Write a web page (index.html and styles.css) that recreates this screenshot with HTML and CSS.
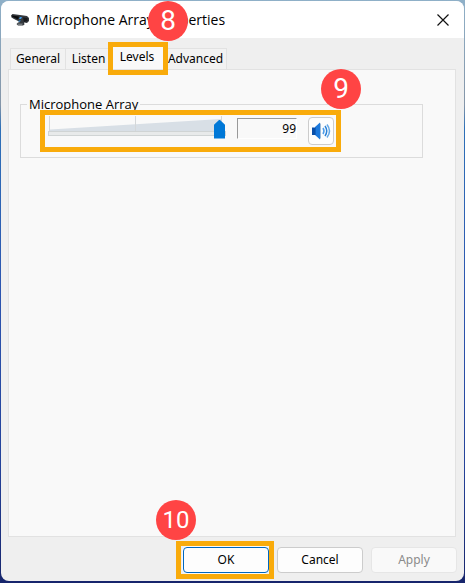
FILE: index.html
```html
<!DOCTYPE html>
<html lang="en">
<head>
<meta charset="utf-8">
<title>Microphone Array Properties</title>
<link rel="stylesheet" href="styles.css">
</head>
<body>
<main class="dialog">
  <header class="titlebar">
    <svg class="mic-icon" viewBox="0 0 18 12" aria-hidden="true">
      <path d="M0 1.5 1.5 0 9 1l7 1 2 2v3l-2 2-3-.5.5 2-1.500 1H7l-1.500-1.500L7 8.500 9 8 3 5 .5 3.500Z" fill="#34383d"/>
      <path d="M1 1.500 8 2.500l-1 3-6-3Z" fill="#08090b"/>
      <path d="M12 3.500 16.500 4v3L13 8Z" fill="#17191c"/>
      <path d="M9 3h2l-1 2H8Z" fill="#3b9bea"/>
      <path d="M8 6.500h2l-1 1H7Z" fill="#2585d5"/>
      <path d="M6 9.500h6l-1 1.500H7Z" fill="#73797e"/>
    </svg>
    <h1 class="title">Microphone Array Properties</h1>
    <button class="close" type="button" aria-label="Close">
      <svg viewBox="0 0 12 12" aria-hidden="true"><path d="M.5.5l11 11M11.500.5l-11 11" stroke="#111" stroke-width="1.200"/></svg>
    </button>
    <span class="badge badge-tab">8</span>
  </header>
  <div class="content">
    <div class="tabs" role="tablist">
      <button class="tab tab-general" type="button" role="tab">General</button>
      <button class="tab tab-listen" type="button" role="tab">Listen</button>
      <button class="tab tab-levels" type="button" role="tab" aria-selected="true">Levels<span class="mark mark-tab"></span></button>
      <button class="tab tab-advanced" type="button" role="tab">Advanced</button>
    </div>
    <section class="panel" role="tabpanel">
      <fieldset class="group">
        <legend>Microphone Array</legend>
        <div class="level-row">
          <div class="slider">
            <svg class="scale" viewBox="0 0 178 16" preserveAspectRatio="none" aria-hidden="true">
              <path d="M2 13.500 173 3v12H2Z" fill="#d8dfe6"/>
              <path d="M1.500 0v15M87.500 0v15M173.500 0v15" stroke="#d4d7d9"/>
            </svg>
            <input class="range" type="range" min="0" max="99" value="99" aria-label="Microphone Array level">
          </div>
          <input class="value" type="text" value="99" aria-label="Level value">
          <button class="mute" type="button" aria-label="Mute">
            <svg viewBox="0 0 20 18" aria-hidden="true">
              <path d="M1 5.500h3.500V13H1Z" fill="#0a4fa8"/>
              <path d="M4 5 9 .5v17L4 13Z" fill="#1b78dc"/>
              <path d="M4.500 5.500V13" stroke="#0d5fc0"/>
              <path d="M9.500 1.500v15" stroke="#9dbbd8"/>
              <path d="M12 6q2 3 0 6" fill="none" stroke="#4d9ce8" stroke-width="1.500"/>
              <path d="M14 4q3.500 5 0 10" fill="none" stroke="#2c83d8" stroke-width="1.500"/>
              <path d="M16 2.500q5 6.500 0 13" fill="none" stroke="#67a9e5" stroke-width="1.500"/>
            </svg>
          </button>
          <span class="mark mark-level"></span>
          <span class="badge badge-level">9</span>
        </div>
      </fieldset>
    </section>
    <footer class="actions">
      <div class="ok-wrap">
        <button class="btn btn-ok" type="button">OK</button>
        <span class="mark mark-ok"></span>
        <span class="badge badge-ok">10</span>
      </div>
      <button class="btn" type="button">Cancel</button>
      <button class="btn" type="button" disabled>Apply</button>
    </footer>
  </div>
</main>
</body>
</html>
```
FILE: styles.css
```css
* { box-sizing: border-box; }
body {
  margin: 0;
  min-height: 100vh;
  padding: 1px 1px 2px;
  display: flex;
  background: linear-gradient(#8fb0c8 0, #8495a8 18%, #2d70b8 22%, #2c55b0 50%, #24429a 80%, #17256c);
  font: 12px/16px "Noto Sans", "Open Sans", sans-serif;
  color: #000;
}
button, input { font: inherit; color: inherit; margin: 0; padding: 0; }
.dialog {
  flex: 1;
  display: flex;
  flex-direction: column;
  border-radius: 8px;
  background: #efefef;
}
.titlebar {
  position: relative;
  height: 37px;
  flex: none;
  display: flex;
  align-items: center;
  padding: 0 15px 0 10px;
  background: #fff;
  border-radius: 8px 8px 0 0;
}
.mic-icon { width: 18px; height: 12px; }
.title {
  flex: 1;
  margin: 0 0 0 7px;
  font: 400 14px/20px "Open Sans", "Noto Sans", sans-serif;
}
.close { width: 12px; height: 12px; border: 0; background: none; }
.close svg { display: block; width: 12px; height: 12px; }
.content {
  flex: 1;
  display: flex;
  flex-direction: column;
  padding: 7px 7px 8px;
}
.tabs { display: flex; align-items: flex-end; height: 24px; padding-left: 2px; }
.tab {
  position: relative;
  height: 21px;
  border: 1px solid #e2e2e2;
  border-width: 1px 1px 0 0;
  background: #f2f2f2;
}
.tab-general { width: 56px; border-left-width: 1px; }
.tab-listen { width: 44px; padding-left: 2px; }
.tab-levels { width: 55px; height: 24px; padding-bottom: 2px; background: #f9f9f9; }
.tab-advanced { width: 62px; }
.panel {
  flex: 1;
  margin-right: 1px;
  padding: 26px 32px 0 11px;
  background: #f9f9f9;
  border: 1px solid #e2e2e2;
}
.group {
  min-width: 0;
  margin: 0;
  padding: 4px 5px 12px 27px;
  border: 1px solid #dcdcdc;
}
.group legend {
  margin-left: -21px;
  padding: 0 2px;
  font: 13px/16px "Open Sans", "Noto Sans", sans-serif;
}
.level-row {
  position: relative;
  display: flex;
  align-items: flex-start;
  width: 286px;
}
.slider { position: relative; flex: 1; height: 28px; }
.scale { display: block; width: 100%; height: 16px; }
.range {
  position: absolute;
  left: 0;
  top: 7px;
  width: 100%;
  height: 20px;
  appearance: none;
  background: none;
}
.range::-webkit-slider-runnable-track {
  height: 5px;
  background: #e8eaea;
  border: 1px solid #d0d4d4;
}
.range::-webkit-slider-thumb {
  appearance: none;
  width: 11px;
  height: 19px;
  margin-top: -12px;
  background: #0078d7;
  clip-path: polygon(50% 0, 100% 28%, 100% 100%, 0 100%, 0 28%);
}
.value {
  width: 60px;
  height: 21px;
  margin: 2px 11px 0;
  text-align: right;
  background: #f9f9f9;
  border: 1px solid #fff;
  border-top-color: #999;
  border-left-color: #999;
  border-radius: 0;
}
.mute {
  width: 26px;
  height: 28px;
  margin-top: 1px;
  display: grid;
  place-items: center;
  background: #fdfdfd;
  border: 1px solid #ccc;
  border-radius: 4px;
}
.mute svg { width: 20px; height: 18px; }
.actions { display: flex; justify-content: flex-end; gap: 8px; padding-top: 10px; }
.ok-wrap { position: relative; }
.btn {
  display: block;
  width: 86px;
  height: 26px;
  background: #fdfdfd;
  border: 1px solid #ccc;
  border-radius: 4px;
}
.btn:disabled { color: #8b8b8b; background: #f9f9f9; border-color: #e6e6e6; }
.btn-ok { border-color: #0067c0; box-shadow: 0 0 0 1px #f9f9f9; }
.mark { position: absolute; border: 5px solid #f9ab0b; pointer-events: none; z-index: 1; }
.mark-tab { inset: -4px -4px -6px -2px; }
.mark-level { inset: -6px -7px -7px -8px; }
.mark-ok { inset: -6px -5px -6px -7px; }
.badge {
  position: absolute;
  z-index: 2;
  width: 40px;
  height: 40px;
  border-radius: 50%;
  background: #ff4444;
  color: #fff;
  font: 400 28px/40px Roboto, "Liberation Sans", sans-serif;
  text-align: center;
}
.badge-tab { left: 147px; top: 0; }
.badge-level { right: -27px; top: -47px; }
.badge-ok { left: -27px; top: -47px; font-size: 24px; }
```
